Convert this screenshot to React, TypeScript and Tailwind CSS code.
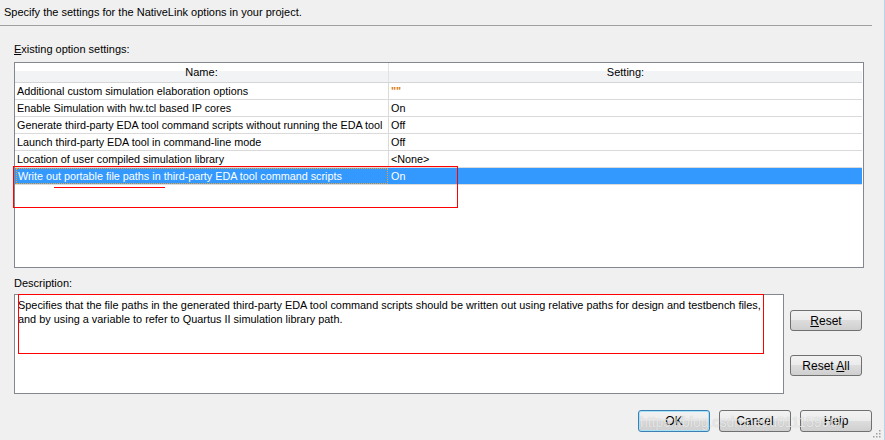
const rows = [
  { name: 'Additional custom simulation elaboration options', value: '""', orange: true },
  { name: 'Enable Simulation with hw.tcl based IP cores', value: 'On' },
  { name: 'Generate third-party EDA tool command scripts without running the EDA tool', value: 'Off' },
  { name: 'Launch third-party EDA tool in command-line mode', value: 'Off' },
  { name: 'Location of user compiled simulation library', value: '<None>' },
  { name: 'Write out portable file paths in third-party EDA tool command scripts', value: 'On', selected: true },
]

function Button({ children, focused, className = '' }: { children: React.ReactNode; focused?: boolean; className?: string }) {
  return (
    <div
      className={`flex w-[72px] items-center justify-center rounded-[3px] border bg-[linear-gradient(to_bottom,#f2f2f2_0%,#ebebeb_50%,#dddddd_50%,#cfcfcf_100%)] text-[12px] text-black ${
        focused ? 'border-[#3c7fb1] shadow-[inset_0_0_0_1px_#a8e2f8]' : 'border-[#707070]'
      } ${className}`}
    >
      {children}
    </div>
  )
}

export default function App() {
  return (
    <div className="relative h-[440px] w-[885px] overflow-hidden border-r border-[#b9d1ea] bg-[#f0f0f0] font-['Liberation_Sans',Arial,sans-serif] text-[11px] text-black">
      {/* top description */}
      <div className="flex h-[25px] items-center pl-[4px] pb-[1px]">Specify the settings for the NativeLink options in your project.</div>
      <div className="h-px w-[872px] bg-[#a0a0a0]" />

      {/* option table */}
      <div className="ml-[14px] mt-[16px] leading-[14px]">
        <span className="underline">E</span>xisting option settings:
      </div>
      <div className="ml-[14px] mt-[6px] flex h-[206px] w-[850px] flex-col border border-[#828790] bg-white text-[10.8px]">
        <div className="flex h-[20px] w-[847px] border-b border-[#d5d5d5] bg-[linear-gradient(to_bottom,#ffffff_0%,#ffffff_40%,#f2f3f4_40%,#f2f3f4_100%)] text-[11px]">
          <div className="flex w-[374px] items-center justify-center border-r border-[#e3e3e3]">Name:</div>
          <div className="flex flex-1 items-center justify-center">Setting:</div>
        </div>
        {rows.map((r) => (
          <div
            key={r.name}
            className={`flex h-[17px] w-[847px] border-b border-[#dadada] ${r.selected ? 'bg-[#3399ff] text-white' : ''}`}
          >
            <div
              className={`flex items-center whitespace-nowrap ${
                r.selected
                  ? 'mx-[1px] w-[372px] border border-dotted border-[#f0a030] pl-[1px]'
                  : 'w-[374px] border-r border-[#dadada] pl-[2px]'
              }`}
            >
              {r.name}
            </div>
            <div className={`flex flex-1 items-center pl-[2px] ${r.orange ? 'font-bold text-[#e07a10]' : ''}`}>
              {r.value}
            </div>
          </div>
        ))}
      </div>

      {/* description */}
      <div className="ml-[14px] mt-[8px] leading-[14px]">Description:</div>
      <div className="ml-[14px] mt-[4px] flex w-[858px] gap-[6px]">
        <div className="h-[100px] w-[770px] border border-[#828790] bg-white pl-[3px] pt-[3px] text-[10.9px] leading-[14px]">
          Specifies that the file paths in the generated third-party EDA tool command scripts should be written out using relative paths for design and testbench files,
          <br />
          and by using a variable to refer to Quartus II simulation library path.
        </div>
        <div className="flex flex-col gap-[24px] pt-[16px]">
          <Button className="h-[21px]">
            <span>
              <span className="underline">R</span>eset
            </span>
          </Button>
          <Button className="h-[21px]">
            <span>
              Reset <span className="underline">A</span>ll
            </span>
          </Button>
        </div>
      </div>

      {/* dialog buttons */}
      <div className="mr-[12px] mt-[16px] flex justify-end gap-[9px]">
        <Button focused className="h-[22px]">OK</Button>
        <Button className="h-[22px]">Cancel</Button>
        <Button className="h-[22px]">Help</Button>
      </div>

      {/* annotations */}
      <div className="absolute left-[13px] top-[166px] h-[42px] w-[445px] border border-solid border-[#ff0000]" />
      <div className="absolute left-[54px] top-[187px] h-[1px] w-[111px] bg-[#ff0000]" />
      <div className="absolute left-[18px] top-[294px] h-[60px] w-[746px] border border-solid border-[#ff0000]" />

      {/* watermark */}
      <div className="pointer-events-none absolute left-[640px] top-[412px] text-[14px] text-white/70 [text-shadow:0_0_1px_rgba(120,120,120,0.5)]">
        https://blog.csdn.net/u011159967
      </div>

      {/* resize grip */}
      <svg className="absolute bottom-[2px] right-[3px]" width="10" height="10" viewBox="0 0 10 10">
        {[
          [8, 2],
          [8, 5],
          [5, 5],
          [8, 8],
          [5, 8],
          [2, 8],
        ].map(([x, y]) => (
          <rect key={`${x}-${y}`} x={x} y={y} width="1.5" height="1.5" fill="#a0a0a0" />
        ))}
      </svg>
    </div>
  )
}
